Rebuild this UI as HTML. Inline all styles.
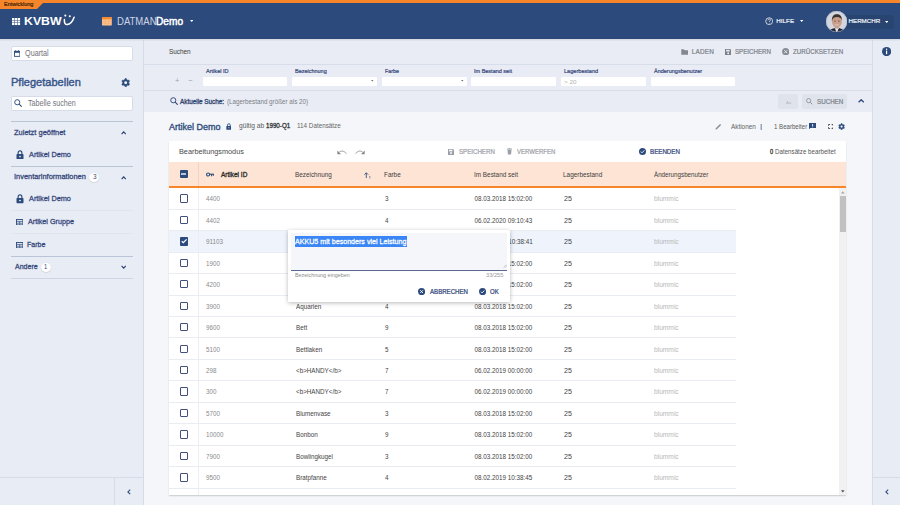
<!DOCTYPE html>
<html><head><meta charset="utf-8"><style>
html,body{margin:0;padding:0;width:900px;height:505px;overflow:hidden;background:#f3f5f9;}
body{position:relative;font-family:"Liberation Sans", sans-serif;}
.t{position:absolute;white-space:nowrap;}
.r{position:absolute;display:block;}
</style></head><body>
<div class="r" style="left:0.00px;top:0.00px;width:900.00px;height:39.00px;background:#2c4a7b;"></div>
<div class="r" style="left:0.00px;top:0.00px;width:900.00px;height:2.70px;background:#f7862a;"></div>
<svg class="r" style="left:0.00px;top:0.00px" width="47" height="10" viewBox="0 0 47 10"><polygon points="0,0 46,0 37,9 0,9" fill="#f7862a"/></svg>
<div class="t" style="left:3.60px;top:2px;font-size:5.5px;line-height:5.5px;color:#3f2208;font-weight:400;-webkit-text-stroke:0.198px #3f2208;transform:scaleX(1.0004);transform-origin:0 0;">Entwicklung</div>
<svg class="r" style="left:12.10px;top:17.90px" width="9" height="8" viewBox="0 0 9 8"><rect x="0.00" y="0.00" width="2.4" height="2.05" fill="#fff"/><rect x="0.00" y="2.50" width="2.4" height="2.05" fill="#fff"/><rect x="0.00" y="5.00" width="2.4" height="2.05" fill="#fff"/><rect x="2.85" y="0.00" width="2.4" height="2.05" fill="#fff"/><rect x="2.85" y="2.50" width="2.4" height="2.05" fill="#fff"/><rect x="2.85" y="5.00" width="2.4" height="2.05" fill="#fff"/><rect x="5.70" y="0.00" width="2.4" height="2.05" fill="#fff"/><rect x="5.70" y="2.50" width="2.4" height="2.05" fill="#fff"/><rect x="5.70" y="5.00" width="2.4" height="2.05" fill="#fff"/></svg>
<div class="t" style="left:24.22px;top:16px;font-size:11px;line-height:11px;color:#fff;font-weight:700;transform:scaleX(1.1177);transform-origin:0 0;">KVBW</div>
<svg class="r" style="left:62.00px;top:13.00px" width="14" height="14" viewBox="0 0 14 14"><circle cx="3.3" cy="2.6" r="1.05" fill="#fff"/><circle cx="7.8" cy="3.2" r="1.05" fill="#fff"/><path d="M2.4,6.5 C2.1,9.9 3.3,11.7 5,11.6 C7.8,11.4 10.6,8.4 12.1,4.2" stroke="#fff" stroke-width="1.5" fill="none" stroke-linecap="round"/></svg>
<svg class="r" style="left:101.80px;top:17.20px" width="9.8" height="8.6" viewBox="0 0 9.8 8.6"><rect x="0" y="0" width="9.8" height="8.6" rx="0.9" fill="#fcc28e"/><rect x="0" y="0" width="9.8" height="2.2" rx="0.9" fill="#f58a32"/><rect x="0" y="1.2" width="9.8" height="1" fill="#f58a32"/><path d="M0,4.3H9.8M0,6.4H9.8M3.27,2.2V8.6M6.53,2.2V8.6" stroke="#f7a867" stroke-width="0.45"/></svg>
<div class="t" style="left:117.08px;top:16px;font-size:10.6px;line-height:10.6px;color:#cdd5e5;font-weight:400;transform:scaleX(0.9004);transform-origin:0 0;">DATMAN</div>
<div class="t" style="left:156.43px;top:16px;font-size:10.6px;line-height:10.6px;color:#fff;font-weight:400;-webkit-text-stroke:0.488px #fff;transform:scaleX(0.9564);transform-origin:0 0;">Demo</div>
<svg class="r" style="left:189.60px;top:20.40px" width="3.4" height="2" viewBox="0 0 3.4 2"><polygon points="0,0 3.4,0 1.7,2" fill="#fff"/></svg>
<svg class="r" style="left:764.60px;top:17.10px" width="8.4" height="8.4" viewBox="0 0 8.4 8.4"><circle cx="4.2" cy="4.2" r="3.45" stroke="#e8ecf3" stroke-width="0.8" fill="none"/><path d="M3,3.3 C3,2.4 3.6,2 4.3,2 C5,2 5.5,2.5 5.5,3.1 C5.5,3.9 4.3,4.1 4.3,5" stroke="#e8ecf3" stroke-width="0.75" fill="none"/><circle cx="4.3" cy="6.2" r="0.45" fill="#e8ecf3"/></svg>
<div class="t" style="left:776.20px;top:18px;font-size:6.2px;line-height:6.2px;color:#eef1f6;font-weight:400;-webkit-text-stroke:0.223px #eef1f6;transform:scaleX(1.0000);transform-origin:0 0;letter-spacing:0.091px;">HILFE</div>
<svg class="r" style="left:800.40px;top:20.40px" width="3.4" height="2" viewBox="0 0 3.4 2"><polygon points="0,0 3.4,0 1.7,2" fill="#fff"/></svg>
<div class="r" style="left:836.00px;top:14.60px;width:57.70px;height:14.00px;background:#284470;border-radius:3px;"></div>
<svg class="r" style="left:825.80px;top:10.70px" width="21.2" height="21.2" viewBox="0 0 21.2 21.2"><defs><clipPath id="av"><circle cx="10.6" cy="10.6" r="10.6"/></clipPath></defs><g clip-path="url(#av)"><rect width="22" height="22" fill="#d3d6de"/><path d="M2,22 L4.5,18.6 L8.6,17 L10.8,18.6 L13,17 L17,18.4 L20,22Z" fill="#1f2433"/><path d="M8.7,17 L10.8,22 L12.9,17Z" fill="#e3e8f0"/><rect x="9" y="14.5" width="3.6" height="3" fill="#c29682"/><ellipse cx="10.9" cy="10.2" rx="4.9" ry="6.6" fill="#c99f8b"/><path d="M5.9,10.2 C5.6,5 8,3.2 10.9,3.2 C13.9,3.2 16.1,5 15.9,9.6 C15.3,7.2 14.2,6 10.9,5.9 C8,5.9 6.6,7.1 5.9,10.2Z" fill="#3b332e"/><ellipse cx="9" cy="9.9" rx="0.8" ry="0.5" fill="#5c463f"/><ellipse cx="12.9" cy="9.9" rx="0.8" ry="0.5" fill="#5c463f"/><path d="M9.2,13.6 Q10.9,14.8 12.6,13.6" stroke="#f0d6cc" stroke-width="0.8" fill="none"/></g><circle cx="10.6" cy="10.6" r="10.3" stroke="#aab2c4" stroke-width="0.6" fill="none"/></svg>
<div class="t" style="left:848.50px;top:18px;font-size:6.2px;line-height:6.2px;color:#eef1f6;font-weight:400;-webkit-text-stroke:0.223px #eef1f6;transform:scaleX(1.0000);transform-origin:0 0;letter-spacing:0.015px;">HERMCHR</div>
<svg class="r" style="left:884.50px;top:20.50px" width="3.4" height="2" viewBox="0 0 3.4 2"><polygon points="0,0 3.4,0 1.7,2" fill="#fff"/></svg>
<div class="r" style="left:0.00px;top:40.00px;width:143.00px;height:465.00px;background:#e8ecf4;"></div>
<div class="r" style="left:143.00px;top:40.00px;width:1.00px;height:465.00px;background:#d5dce8;"></div>
<div class="r" style="left:11.00px;top:46.00px;width:121.60px;height:15.00px;background:#fff;border:1px solid #d6dde8;border-radius:2px;box-sizing:border-box;"></div>
<svg class="r" style="left:13.90px;top:50.30px" width="6.3" height="6.8" viewBox="0 0 6.3 6.8"><rect x="0.45" y="1.3" width="5.4" height="5.05" fill="none" stroke="#2c4a7b" stroke-width="0.9"/><rect x="0.45" y="1.1" width="5.4" height="1.7" fill="#2c4a7b"/><rect x="1.3" y="0.2" width="0.8" height="1.2" fill="#2c4a7b"/><rect x="4.2" y="0.2" width="0.8" height="1.2" fill="#2c4a7b"/></svg>
<div class="t" style="left:24.74px;top:49px;font-size:8.3px;line-height:8.3px;color:#6f6f7a;font-weight:400;transform:scaleX(0.8721);transform-origin:0 0;">Quartal</div>
<div class="t" style="left:10.63px;top:77px;font-size:11.4px;line-height:11.4px;color:#36548a;font-weight:400;-webkit-text-stroke:0.41px #36548a;transform:scaleX(0.9672);transform-origin:0 0;">Pflegetabellen</div>
<svg class="r" style="left:120.90px;top:77.60px" width="9.4" height="9.4" viewBox="-4 -4 108 108"><polygon points="43.73,2.41 56.27,2.41 63.59,17.18 71.62,21.82 88.08,20.78 94.35,31.63 85.22,45.36 85.22,54.64 94.35,68.37 88.08,79.22 71.62,78.18 63.59,82.82 56.27,97.59 43.73,97.59 36.41,82.82 28.38,78.18 11.92,79.22 5.65,68.37 14.78,54.64 14.78,45.36 5.65,31.63 11.92,20.78 28.38,21.82 36.41,17.18" fill="#2c4a7b" stroke="#2c4a7b" stroke-width="6" stroke-linejoin="round"/><circle cx="50" cy="50" r="17" fill="#e8ecf4"/></svg>
<div class="r" style="left:11.00px;top:96.00px;width:121.60px;height:15.00px;background:#fff;border:1px solid #d6dde8;border-radius:2px;box-sizing:border-box;"></div>
<svg class="r" style="left:14.00px;top:99.30px" width="8.3" height="8.3" viewBox="0 0 8.4 8.4"><circle cx="3.3" cy="3.3" r="2.6" stroke="#2c4a7b" stroke-width="0.95" fill="none"/><path d="M5.2,5.2 L7.8,7.8" stroke="#2c4a7b" stroke-width="1.14"/></svg>
<div class="t" style="left:27.61px;top:99px;font-size:8.3px;line-height:8.3px;color:#74747e;font-weight:400;transform:scaleX(0.8620);transform-origin:0 0;">Tabelle suchen</div>
<div class="r" style="left:11.00px;top:121.00px;width:121.60px;height:1.00px;background:#b9c4d7;"></div>
<div class="t" style="left:14.20px;top:129px;font-size:7.3px;line-height:7.3px;color:#34467a;font-weight:400;-webkit-text-stroke:0.263px #34467a;transform:scaleX(1.0248);transform-origin:0 0;">Zuletzt geöffnet</div>
<svg class="r" style="left:120.80px;top:130.80px" width="5.4" height="4" viewBox="0 0 5.4 4"><path d="M0.6,3.2 L2.70,0.8 L4.80,3.2" stroke="#2d4370" stroke-width="1.1" fill="none"/></svg>
<svg class="r" style="left:16.40px;top:149.60px" width="8.0" height="9.4" viewBox="0 0 8 9.4"><path d="M2.1,4.3 V2.9 A1.9,1.95 0 0 1 5.9,2.9 V4.3" stroke="#2c4a7b" stroke-width="1.15" fill="none"/><rect x="0.5" y="4" width="7" height="5.3" rx="0.7" fill="#2c4a7b"/><circle cx="4" cy="6.6" r="0.8" fill="#fff"/></svg>
<div class="t" style="left:29.00px;top:151px;font-size:7.3px;line-height:7.3px;color:#34467a;font-weight:400;-webkit-text-stroke:0.263px #34467a;transform:scaleX(1.0043);transform-origin:0 0;">Artikel Demo</div>
<div class="r" style="left:11.00px;top:166.00px;width:121.60px;height:1.00px;background:#b9c4d7;"></div>
<div class="t" style="left:13.99px;top:173px;font-size:7.3px;line-height:7.3px;color:#34467a;font-weight:400;-webkit-text-stroke:0.263px #34467a;transform:scaleX(1.0180);transform-origin:0 0;">Inventarinformationen</div>
<div class="r" style="left:89.10px;top:172.90px;width:9.80px;height:9.00px;background:#fff;border-radius:50%;box-shadow:0 0.5px 1px rgba(0,0,0,0.18);"></div>
<div class="t" style="left:92.59px;top:174px;font-size:6.3px;line-height:6.3px;color:#3d4a78;font-weight:400;transform:scaleX(1.0323);transform-origin:0 0;">3</div>
<svg class="r" style="left:120.80px;top:175.50px" width="5.4" height="4" viewBox="0 0 5.4 4"><path d="M0.6,3.2 L2.70,0.8 L4.80,3.2" stroke="#2d4370" stroke-width="1.1" fill="none"/></svg>
<svg class="r" style="left:16.40px;top:194.20px" width="8.0" height="9.4" viewBox="0 0 8 9.4"><path d="M2.1,4.3 V2.9 A1.9,1.95 0 0 1 5.9,2.9 V4.3" stroke="#2c4a7b" stroke-width="1.15" fill="none"/><rect x="0.5" y="4" width="7" height="5.3" rx="0.7" fill="#2c4a7b"/><circle cx="4" cy="6.6" r="0.8" fill="#fff"/></svg>
<div class="t" style="left:29.00px;top:195px;font-size:7.3px;line-height:7.3px;color:#34467a;font-weight:400;-webkit-text-stroke:0.263px #34467a;transform:scaleX(1.0043);transform-origin:0 0;">Artikel Demo</div>
<div class="r" style="left:11.00px;top:210.30px;width:121.60px;height:0.70px;background:#dfe4ed;"></div>
<svg class="r" style="left:15.60px;top:218.60px" width="7.4" height="6.4" viewBox="0 0 7.4 6.4"><rect x="0.45" y="0.45" width="6.5" height="5.5" fill="none" stroke="#2c4a7b" stroke-width="0.9"/><path d="M0.4,2.4H7M3.7,2.4V6M0.4,4.2H7" stroke="#2c4a7b" stroke-width="0.7"/></svg>
<div class="t" style="left:27.70px;top:218px;font-size:7.3px;line-height:7.3px;color:#34467a;font-weight:400;-webkit-text-stroke:0.263px #34467a;transform:scaleX(0.9849);transform-origin:0 0;">Artikel Gruppe</div>
<div class="r" style="left:11.00px;top:233.30px;width:121.60px;height:0.70px;background:#dfe4ed;"></div>
<svg class="r" style="left:15.60px;top:241.50px" width="7.4" height="6.4" viewBox="0 0 7.4 6.4"><rect x="0.45" y="0.45" width="6.5" height="5.5" fill="none" stroke="#2c4a7b" stroke-width="0.9"/><path d="M0.4,2.4H7M3.7,2.4V6M0.4,4.2H7" stroke="#2c4a7b" stroke-width="0.7"/></svg>
<div class="t" style="left:27.22px;top:241px;font-size:7.3px;line-height:7.3px;color:#34467a;font-weight:400;-webkit-text-stroke:0.263px #34467a;transform:scaleX(0.9612);transform-origin:0 0;">Farbe</div>
<div class="r" style="left:11.00px;top:255.60px;width:121.60px;height:1.00px;background:#b9c4d7;"></div>
<div class="t" style="left:14.60px;top:263px;font-size:7.3px;line-height:7.3px;color:#34467a;font-weight:400;-webkit-text-stroke:0.263px #34467a;transform:scaleX(0.9622);transform-origin:0 0;">Andere</div>
<div class="r" style="left:41.00px;top:262.60px;width:9.80px;height:9.00px;background:#fff;border-radius:50%;box-shadow:0 0.5px 1px rgba(0,0,0,0.18);"></div>
<div class="t" style="left:44.23px;top:264px;font-size:6.3px;line-height:6.3px;color:#3d4a78;font-weight:400;transform:scaleX(0.9286);transform-origin:0 0;">1</div>
<svg class="r" style="left:120.80px;top:265.20px" width="5.4" height="4" viewBox="0 0 5.4 4"><path d="M0.6,0.8 L2.70,3.2 L4.80,0.8" stroke="#2d4370" stroke-width="1.1" fill="none"/></svg>
<div class="r" style="left:11.00px;top:277.80px;width:121.60px;height:0.90px;background:#cdd5e3;"></div>
<div class="r" style="left:0.00px;top:476.80px;width:143.00px;height:1.00px;background:#d5dce8;"></div>
<div class="r" style="left:114.00px;top:477.80px;width:1.00px;height:27.20px;background:#d5dce8;"></div>
<svg class="r" style="left:127.30px;top:488.60px" width="4" height="6" viewBox="0 0 4 6"><path d="M3.2,0.6 L0.9,2.9 L3.2,5.2" stroke="#2c4a7b" stroke-width="1.1" fill="none"/></svg>
<div class="r" style="left:871.60px;top:40.00px;width:28.40px;height:465.00px;background:#e8ecf4;"></div>
<div class="r" style="left:871.60px;top:40.00px;width:0.80px;height:465.00px;background:#d7dde8;"></div>
<svg class="r" style="left:881.80px;top:47.00px" width="9.2" height="9.2" viewBox="0 0 9.2 9.2"><circle cx="4.6" cy="4.6" r="4.6" fill="#2c4a7b"/><rect x="4.0" y="3.6" width="1.2" height="3.6" fill="#fff"/><circle cx="4.6" cy="2.3" r="0.7" fill="#fff"/></svg>
<div class="r" style="left:872.40px;top:476.80px;width:27.60px;height:1.00px;background:#d5dce8;"></div>
<svg class="r" style="left:884.60px;top:488.60px" width="4" height="6" viewBox="0 0 4 6"><path d="M3.2,0.6 L0.9,2.9 L3.2,5.2" stroke="#2c4a7b" stroke-width="1.1" fill="none"/></svg>
<div class="r" style="left:144.00px;top:40.00px;width:727.60px;height:71.80px;background:#e9ecf4;"></div>
<div class="t" style="left:168.73px;top:48px;font-size:7.0px;line-height:7.0px;color:#3a3a3a;font-weight:400;transform:scaleX(0.9111);transform-origin:0 0;">Suchen</div>
<svg class="r" style="left:681.00px;top:48.90px" width="7.4" height="6" viewBox="0 0 7.4 6"><path d="M0.3,0.3 H2.8 L3.7,1.2 H7.2 V5.8 H0.3Z" fill="#83878f"/></svg>
<div class="t" style="left:691.80px;top:49px;font-size:6.4px;line-height:6.4px;color:#80858d;font-weight:400;-webkit-text-stroke:0.23px #80858d;transform:scaleX(1.0000);transform-origin:0 0;letter-spacing:0.170px;">LADEN</div>
<svg class="r" style="left:724.90px;top:48.50px" width="6.4" height="6.4" viewBox="0 0 6.4 6.4"><path d="M0,0 H5.3 L6.4,1.1 V6.4 H0Z" fill="#7c8089"/><rect x="1.1" y="0.8" width="3.6" height="1.7" fill="#e9ecf4"/><circle cx="3.2" cy="4.3" r="1" fill="#e9ecf4"/></svg>
<div class="t" style="left:735.41px;top:49px;font-size:6.4px;line-height:6.4px;color:#80858d;font-weight:400;-webkit-text-stroke:0.23px #80858d;transform:scaleX(0.9667);transform-origin:0 0;letter-spacing:0.000px;">SPEICHERN</div>
<svg class="r" style="left:782.00px;top:48.00px" width="7.4" height="7.4" viewBox="0 0 7.4 7.4"><circle cx="3.7" cy="3.7" r="3.6" fill="#878b93"/><path d="M2.2,2.2 L5.2,5.2 M5.2,2.2 L2.2,5.2" stroke="#e9ecf4" stroke-width="0.9"/></svg>
<div class="t" style="left:793.11px;top:49px;font-size:6.4px;line-height:6.4px;color:#80858d;font-weight:400;-webkit-text-stroke:0.23px #80858d;transform:scaleX(0.9689);transform-origin:0 0;letter-spacing:0.000px;">ZURÜCKSETZEN</div>
<div class="r" style="left:144.00px;top:63.60px;width:727.60px;height:0.80px;background:#d8dee9;"></div>
<div class="t" style="left:205.60px;top:68px;font-size:6.0px;line-height:6.0px;color:#34467a;font-weight:400;-webkit-text-stroke:0.216px #34467a;transform:scaleX(0.9293);transform-origin:0 0;">Artikel ID</div>
<div class="t" style="left:294.93px;top:68px;font-size:6.0px;line-height:6.0px;color:#34467a;font-weight:400;-webkit-text-stroke:0.216px #34467a;transform:scaleX(0.9129);transform-origin:0 0;">Bezeichnung</div>
<div class="t" style="left:384.65px;top:68px;font-size:6.0px;line-height:6.0px;color:#34467a;font-weight:400;-webkit-text-stroke:0.216px #34467a;transform:scaleX(0.8845);transform-origin:0 0;">Farbe</div>
<div class="t" style="left:474.04px;top:68px;font-size:6.0px;line-height:6.0px;color:#34467a;font-weight:400;-webkit-text-stroke:0.216px #34467a;transform:scaleX(0.9172);transform-origin:0 0;">Im Bestand seit</div>
<div class="t" style="left:563.63px;top:68px;font-size:6.0px;line-height:6.0px;color:#34467a;font-weight:400;-webkit-text-stroke:0.216px #34467a;transform:scaleX(0.9316);transform-origin:0 0;">Lagerbestand</div>
<div class="t" style="left:653.60px;top:68px;font-size:6.0px;line-height:6.0px;color:#34467a;font-weight:400;-webkit-text-stroke:0.216px #34467a;transform:scaleX(0.9183);transform-origin:0 0;">Änderungsbenutzer</div>
<div class="r" style="left:202.80px;top:76.70px;width:84.50px;height:9.10px;background:#fff;border-radius:1px;"></div>
<div class="r" style="left:292.00px;top:76.70px;width:84.80px;height:9.10px;background:#fff;border-radius:1px;"></div>
<svg class="r" style="left:371.20px;top:80.20px" width="2.6" height="1.6" viewBox="0 0 2.6 1.6"><polygon points="0,0 2.6,0 1.3,1.6" fill="#777"/></svg>
<div class="r" style="left:382.00px;top:76.70px;width:84.70px;height:9.10px;background:#fff;border-radius:1px;"></div>
<svg class="r" style="left:461.10px;top:80.20px" width="2.6" height="1.6" viewBox="0 0 2.6 1.6"><polygon points="0,0 2.6,0 1.3,1.6" fill="#777"/></svg>
<div class="r" style="left:471.30px;top:76.70px;width:84.70px;height:9.10px;background:#fff;border-radius:1px;"></div>
<div class="r" style="left:560.70px;top:76.70px;width:85.30px;height:9.10px;background:#fff;border-radius:1px;"></div>
<div class="r" style="left:650.70px;top:76.70px;width:84.60px;height:9.10px;background:#fff;border-radius:1px;"></div>
<div class="t" style="left:564.29px;top:80px;font-size:5.9px;line-height:5.9px;color:#b0b0b0;font-weight:400;transform:scaleX(1.0652);transform-origin:0 0;">&gt; 20</div>
<div class="t" style="left:175.00px;top:77px;font-size:7.5px;line-height:7.5px;color:#9aa0aa;font-weight:400;transform:scaleX(1.0000);transform-origin:0 0;">+</div>
<div class="t" style="left:188.30px;top:77px;font-size:7.5px;line-height:7.5px;color:#9aa0aa;font-weight:400;transform:scaleX(1.0000);transform-origin:0 0;">−</div>
<div class="r" style="left:144.00px;top:90.20px;width:727.60px;height:0.80px;background:#d8dee9;"></div>
<svg class="r" style="left:170.00px;top:97.20px" width="8.3" height="8.3" viewBox="0 0 8.4 8.4"><circle cx="3.3" cy="3.3" r="2.6" stroke="#2c4a7b" stroke-width="0.95" fill="none"/><path d="M5.2,5.2 L7.8,7.8" stroke="#2c4a7b" stroke-width="1.14"/></svg>
<div class="t" style="left:180.00px;top:99px;font-size:6.4px;line-height:6.4px;color:#2d4370;font-weight:400;-webkit-text-stroke:0.294px #2d4370;transform:scaleX(0.9933);transform-origin:0 0;">Aktuelle Suche:</div>
<div class="t" style="left:227.41px;top:99px;font-size:6.4px;line-height:6.4px;color:#7a7f88;font-weight:400;transform:scaleX(0.9798);transform-origin:0 0;">(Lagerbestand größer als 20)</div>
<div class="r" style="left:777.80px;top:94.40px;width:20.40px;height:14.50px;background:#dfe3eb;border-radius:2px;"></div>
<div class="t" style="left:785.60px;top:101px;font-size:4.2px;line-height:4.2px;color:#b3b6bc;font-weight:400;transform:scaleX(0.9997);transform-origin:0 0;">Aa</div>
<div class="r" style="left:802.20px;top:94.40px;width:44.50px;height:14.50px;background:#dfe3eb;border-radius:2px;"></div>
<svg class="r" style="left:806.20px;top:98.30px" width="6.8" height="6.8" viewBox="0 0 8.4 8.4"><circle cx="3.3" cy="3.3" r="2.6" stroke="#8a9099" stroke-width="1.0" fill="none"/><path d="M5.2,5.2 L7.8,7.8" stroke="#8a9099" stroke-width="1.2"/></svg>
<div class="t" style="left:817.11px;top:99px;font-size:6.4px;line-height:6.4px;color:#80858d;font-weight:400;-webkit-text-stroke:0.23px #80858d;transform:scaleX(0.9733);transform-origin:0 0;letter-spacing:0.000px;">SUCHEN</div>
<svg class="r" style="left:858.00px;top:99.20px" width="6.4" height="4" viewBox="0 0 6.4 4"><path d="M0.6,3.2 L3.20,0.8 L5.80,3.2" stroke="#2c4a7b" stroke-width="1.4" fill="none"/></svg>
<div class="r" style="left:144.00px;top:111.80px;width:727.60px;height:393.20px;background:#f4f6f9;"></div>
<div class="t" style="left:169.20px;top:122px;font-size:9.8px;line-height:9.8px;color:#2c4a7b;font-weight:400;-webkit-text-stroke:0.353px #2c4a7b;transform:scaleX(0.9203);transform-origin:0 0;">Artikel Demo</div>
<svg class="r" style="left:225.70px;top:123.20px" width="5.76" height="6.768" viewBox="0 0 8 9.4"><path d="M2.1,4.3 V2.9 A1.9,1.95 0 0 1 5.9,2.9 V4.3" stroke="#2c4a7b" stroke-width="1.15" fill="none"/><rect x="0.5" y="4" width="7" height="5.3" rx="0.7" fill="#2c4a7b"/><circle cx="4" cy="6.6" r="0.8" fill="#fff"/></svg>
<div class="t" style="left:239.49px;top:123px;font-size:6.3px;line-height:6.3px;color:#5a5a5a;font-weight:400;transform:scaleX(1.0549);transform-origin:0 0;">gültig ab</div>
<div class="t" style="left:265.91px;top:123px;font-size:6.3px;line-height:6.3px;color:#333;font-weight:400;-webkit-text-stroke:0.29px #333;transform:scaleX(0.9868);transform-origin:0 0;">1990-Q1</div>
<div class="t" style="left:297.30px;top:123px;font-size:6.3px;line-height:6.3px;color:#666;font-weight:400;transform:scaleX(1.0033);transform-origin:0 0;">114 Datensätze</div>
<svg class="r" style="left:715.00px;top:122.90px" width="7" height="7" viewBox="0 0 7 7"><path d="M0.5,6.5 L0.8,5.2 L5.1,0.9 L6.1,1.9 L1.8,6.2Z" fill="#85888e"/></svg>
<div class="t" style="left:731.20px;top:124px;font-size:6.3px;line-height:6.3px;color:#616161;font-weight:400;transform:scaleX(1.0119);transform-origin:0 0;">Aktionen</div>
<svg class="r" style="left:760.00px;top:123.60px" width="2.4" height="6.4" viewBox="0 0 2.4 6.4"><circle cx="1.2" cy="1" r="0.75" fill="#43598a"/><circle cx="1.2" cy="3" r="0.75" fill="#43598a"/><circle cx="1.2" cy="5" r="0.75" fill="#43598a"/></svg>
<div class="t" style="left:773.51px;top:124px;font-size:6.3px;line-height:6.3px;color:#5a5a5a;font-weight:400;transform:scaleX(0.9668);transform-origin:0 0;">1 Bearbeiter</div>
<svg class="r" style="left:809.20px;top:123.40px" width="7.2" height="6.2" viewBox="0 0 7.2 6.2"><path d="M0,0 H7.2 V5 H1.4 L0,6.2Z" fill="#2c4a7b"/><rect x="3.2" y="1" width="0.9" height="2.1" fill="#fff"/><rect x="3.2" y="3.5" width="0.9" height="0.8" fill="#fff"/></svg>
<svg class="r" style="left:827.80px;top:124.00px" width="5.6" height="5" viewBox="0 0 5.6 5"><path d="M0.5,1.8V0.5H2 M3.6,0.5H5.1V1.8 M5.1,3.2V4.5H3.6 M2,4.5H0.5V3.2" stroke="#4a4a4a" stroke-width="0.95" fill="none"/></svg>
<svg class="r" style="left:837.60px;top:123.00px" width="7.2" height="7.2" viewBox="-4 -4 108 108"><polygon points="43.73,2.41 56.27,2.41 63.59,17.18 71.62,21.82 88.08,20.78 94.35,31.63 85.22,45.36 85.22,54.64 94.35,68.37 88.08,79.22 71.62,78.18 63.59,82.82 56.27,97.59 43.73,97.59 36.41,82.82 28.38,78.18 11.92,79.22 5.65,68.37 14.78,54.64 14.78,45.36 5.65,31.63 11.92,20.78 28.38,21.82 36.41,17.18" fill="#2c4a7b" stroke="#2c4a7b" stroke-width="6" stroke-linejoin="round"/><circle cx="50" cy="50" r="17" fill="#f3f5f9"/></svg>
<div class="r" style="left:168.60px;top:141.10px;width:677.60px;height:353.90px;background:#fff;box-shadow:0 0.6px 1.2px rgba(0,0,0,0.18);"></div>
<div class="t" style="left:179.38px;top:148px;font-size:7.0px;line-height:7.0px;color:#4a4a4a;font-weight:400;transform:scaleX(1.0412);transform-origin:0 0;">Bearbeitungsmodus</div>
<svg class="r" style="left:337.40px;top:149.80px" width="10" height="5" viewBox="0 0 10 5"><path d="M2.2,2.2 C4,0.6 7.2,0.5 9.3,3.6" stroke="#85898f" stroke-width="0.85" fill="none"/><polygon points="0.3,0.4 0.3,4.2 4.1,4.2" fill="#85898f"/></svg>
<svg class="r" style="left:355.30px;top:149.80px" width="10" height="5" viewBox="0 0 10 5"><path d="M7.8,2.2 C6,0.6 2.8,0.5 0.7,3.6" stroke="#85898f" stroke-width="0.85" fill="none"/><polygon points="9.7,0.4 9.7,4.2 5.9,4.2" fill="#85898f"/></svg>
<svg class="r" style="left:447.90px;top:148.80px" width="6" height="6" viewBox="0 0 6.4 6.4"><path d="M0,0 H5.3 L6.4,1.1 V6.4 H0Z" fill="#9aa0a8"/><rect x="1.1" y="0.8" width="3.6" height="1.7" fill="#fff"/><circle cx="3.2" cy="4.3" r="1" fill="#fff"/></svg>
<div class="t" style="left:458.61px;top:149px;font-size:6.4px;line-height:6.4px;color:#9fa3aa;font-weight:400;-webkit-text-stroke:0.23px #9fa3aa;transform:scaleX(0.9613);transform-origin:0 0;letter-spacing:0.000px;">SPEICHERN</div>
<svg class="r" style="left:506.50px;top:148.40px" width="5" height="6.6" viewBox="0 0 5 6.6"><rect x="0" y="0.6" width="5" height="0.9" fill="#9aa0a8"/><rect x="1.6" y="0" width="1.8" height="0.8" fill="#9aa0a8"/><path d="M0.5,1.8 H4.5 L4.1,6.6 H0.9Z" fill="#9aa0a8"/></svg>
<div class="t" style="left:516.70px;top:149px;font-size:6.4px;line-height:6.4px;color:#9fa3aa;font-weight:400;-webkit-text-stroke:0.23px #9fa3aa;transform:scaleX(0.9391);transform-origin:0 0;letter-spacing:0.000px;">VERWERFEN</div>
<svg class="r" style="left:639.00px;top:148.00px" width="7" height="7" viewBox="0 0 7 7"><circle cx="3.5" cy="3.5" r="3.5" fill="#2c4a7b"/><path d="M1.8,3.6 L3,4.8 L5.3,2.4" stroke="#fff" stroke-width="0.9" fill="none"/></svg>
<div class="t" style="left:649.52px;top:149px;font-size:6.4px;line-height:6.4px;color:#34477a;font-weight:400;-webkit-text-stroke:0.23px #34477a;transform:scaleX(0.9693);transform-origin:0 0;letter-spacing:0.000px;">BEENDEN</div>
<div class="t" style="left:769.82px;top:149px;font-size:6.3px;line-height:6.3px;color:#333;font-weight:400;-webkit-text-stroke:0.29px #333;transform:scaleX(0.9032);transform-origin:0 0;">0</div>
<div class="t" style="left:775.11px;top:149px;font-size:6.3px;line-height:6.3px;color:#555;font-weight:400;transform:scaleX(0.9838);transform-origin:0 0;">Datensätze bearbeitet</div>
<div class="r" style="left:168.60px;top:162.40px;width:677.60px;height:23.90px;background:#fde4d4;"></div>
<div class="r" style="left:168.60px;top:186.30px;width:677.60px;height:1.60px;background:#f7862a;"></div>
<div class="r" style="left:198.00px;top:162.40px;width:0.70px;height:23.90px;background:#f3d3c0;"></div>
<div class="r" style="left:179.90px;top:170.10px;width:7.90px;height:7.80px;background:#2c4a7b;border-radius:1px;"></div>
<div class="r" style="left:181.40px;top:173.20px;width:4.70px;height:1.50px;background:#b9c3d6;"></div>
<svg class="r" style="left:205.60px;top:172.40px" width="8.2" height="5" viewBox="0 0 8.2 5"><circle cx="2.1" cy="2.5" r="1.55" stroke="#2c4a7b" stroke-width="1.1" fill="none"/><path d="M3.4,2.2 H7.9" stroke="#2c4a7b" stroke-width="1.1"/><path d="M5.6,2.2 V4.3 M7.3,2.2 V3.9" stroke="#2c4a7b" stroke-width="1" fill="none"/></svg>
<div class="t" style="left:221.00px;top:172px;font-size:6.3px;line-height:6.3px;color:#2a2a2a;font-weight:400;-webkit-text-stroke:0.29px #2a2a2a;transform:scaleX(1.0315);transform-origin:0 0;">Artikel ID</div>
<div class="t" style="left:294.59px;top:172px;font-size:6.3px;line-height:6.3px;color:#404040;font-weight:400;transform:scaleX(1.0106);transform-origin:0 0;">Bezeichnung</div>
<svg class="r" style="left:363.60px;top:171.80px" width="7" height="7" viewBox="0 0 7 7"><path d="M2.3,6 V0.9 M0.4,2.7 L2.3,0.8 L4.2,2.7" stroke="#2c4a7b" stroke-width="0.85" fill="none"/><path d="M5.3,4.6 L5.9,4.2 V6.6" stroke="#2c4a7b" stroke-width="0.5" fill="none"/></svg>
<div class="t" style="left:384.19px;top:172px;font-size:6.3px;line-height:6.3px;color:#404040;font-weight:400;transform:scaleX(1.0156);transform-origin:0 0;">Farbe</div>
<div class="t" style="left:473.99px;top:172px;font-size:6.3px;line-height:6.3px;color:#404040;font-weight:400;transform:scaleX(1.0123);transform-origin:0 0;">Im Bestand seit</div>
<div class="t" style="left:563.49px;top:172px;font-size:6.3px;line-height:6.3px;color:#404040;font-weight:400;transform:scaleX(1.0178);transform-origin:0 0;">Lagerbestand</div>
<div class="t" style="left:654.00px;top:172px;font-size:6.3px;line-height:6.3px;color:#404040;font-weight:400;transform:scaleX(0.9892);transform-origin:0 0;">Änderungsbenutzer</div>
<div class="r" style="left:168.60px;top:208.75px;width:567.40px;height:0.70px;background:#e9ecf1;"></div>
<div class="r" style="left:180.00px;top:194.40px;width:8.30px;height:8.30px;background:#fff;border:1.25px solid #434e7a;border-radius:1px;box-sizing:border-box;"></div>
<div class="t" style="left:205.90px;top:196px;font-size:6.3px;line-height:6.3px;color:#8a8a8a;font-weight:400;transform:scaleX(0.9965);transform-origin:0 0;">4400</div>
<div class="t" style="left:384.80px;top:196px;font-size:6.3px;line-height:6.3px;color:#444;font-weight:400;transform:scaleX(0.9965);transform-origin:0 0;">3</div>
<div class="t" style="left:474.60px;top:196px;font-size:6.3px;line-height:6.3px;color:#444;font-weight:400;transform:scaleX(1.0000);transform-origin:0 0;">08.03.2018 15:02:00</div>
<div class="t" style="left:564.06px;top:196px;font-size:6.3px;line-height:6.3px;color:#444;font-weight:400;transform:scaleX(1.1224);transform-origin:0 0;">25</div>
<div class="t" style="left:653.68px;top:196px;font-size:6.3px;line-height:6.3px;color:#b8b8b8;font-weight:400;transform:scaleX(1.0523);transform-origin:0 0;">blummic</div>
<div class="r" style="left:168.60px;top:230.20px;width:567.40px;height:0.70px;background:#e9ecf1;"></div>
<div class="r" style="left:180.00px;top:215.85px;width:8.30px;height:8.30px;background:#fff;border:1.25px solid #434e7a;border-radius:1px;box-sizing:border-box;"></div>
<div class="t" style="left:205.90px;top:218px;font-size:6.3px;line-height:6.3px;color:#8a8a8a;font-weight:400;transform:scaleX(0.9965);transform-origin:0 0;">4402</div>
<div class="t" style="left:384.90px;top:218px;font-size:6.3px;line-height:6.3px;color:#444;font-weight:400;transform:scaleX(0.9965);transform-origin:0 0;">4</div>
<div class="t" style="left:474.60px;top:218px;font-size:6.3px;line-height:6.3px;color:#444;font-weight:400;transform:scaleX(1.0000);transform-origin:0 0;">06.02.2020 09:10:43</div>
<div class="t" style="left:564.06px;top:218px;font-size:6.3px;line-height:6.3px;color:#444;font-weight:400;transform:scaleX(1.1224);transform-origin:0 0;">25</div>
<div class="t" style="left:653.68px;top:218px;font-size:6.3px;line-height:6.3px;color:#b8b8b8;font-weight:400;transform:scaleX(1.0523);transform-origin:0 0;">blummic</div>
<div class="r" style="left:168.60px;top:230.90px;width:567.40px;height:20.85px;background:#eef3fc;"></div>
<div class="r" style="left:168.60px;top:251.65px;width:567.40px;height:0.70px;background:#e9ecf1;"></div>
<div class="r" style="left:180.00px;top:237.30px;width:8.30px;height:8.30px;background:#2c4a7b;border-radius:1px;"></div>
<svg class="r" style="left:180.00px;top:237.30px" width="8.3" height="8.3" viewBox="0 0 8.3 8.3"><path d="M1.7,4.2 L3.3,5.7 L6.6,2.4" stroke="#fff" stroke-width="1.25" fill="none"/></svg>
<div class="t" style="left:205.80px;top:239px;font-size:6.3px;line-height:6.3px;color:#8a8a8a;font-weight:400;transform:scaleX(0.9965);transform-origin:0 0;">91103</div>
<div class="t" style="left:474.60px;top:239px;font-size:6.3px;line-height:6.3px;color:#444;font-weight:400;transform:scaleX(1.0017);transform-origin:0 0;">08.02.2019 10:38:41</div>
<div class="t" style="left:564.06px;top:239px;font-size:6.3px;line-height:6.3px;color:#444;font-weight:400;transform:scaleX(1.1224);transform-origin:0 0;">25</div>
<div class="t" style="left:653.68px;top:239px;font-size:6.3px;line-height:6.3px;color:#b8b8b8;font-weight:400;transform:scaleX(1.0523);transform-origin:0 0;">blummic</div>
<div class="r" style="left:168.60px;top:273.10px;width:567.40px;height:0.70px;background:#e9ecf1;"></div>
<div class="r" style="left:180.00px;top:258.75px;width:8.30px;height:8.30px;background:#fff;border:1.25px solid #434e7a;border-radius:1px;box-sizing:border-box;"></div>
<div class="t" style="left:205.60px;top:261px;font-size:6.3px;line-height:6.3px;color:#8a8a8a;font-weight:400;transform:scaleX(0.9965);transform-origin:0 0;">1900</div>
<div class="t" style="left:474.60px;top:261px;font-size:6.3px;line-height:6.3px;color:#444;font-weight:400;transform:scaleX(1.0000);transform-origin:0 0;">08.03.2018 15:02:00</div>
<div class="t" style="left:564.06px;top:261px;font-size:6.3px;line-height:6.3px;color:#444;font-weight:400;transform:scaleX(1.1224);transform-origin:0 0;">25</div>
<div class="t" style="left:653.68px;top:261px;font-size:6.3px;line-height:6.3px;color:#b8b8b8;font-weight:400;transform:scaleX(1.0523);transform-origin:0 0;">blummic</div>
<div class="r" style="left:168.60px;top:294.55px;width:567.40px;height:0.70px;background:#e9ecf1;"></div>
<div class="r" style="left:180.00px;top:280.20px;width:8.30px;height:8.30px;background:#fff;border:1.25px solid #434e7a;border-radius:1px;box-sizing:border-box;"></div>
<div class="t" style="left:205.90px;top:282px;font-size:6.3px;line-height:6.3px;color:#8a8a8a;font-weight:400;transform:scaleX(0.9965);transform-origin:0 0;">4200</div>
<div class="t" style="left:474.60px;top:282px;font-size:6.3px;line-height:6.3px;color:#444;font-weight:400;transform:scaleX(1.0000);transform-origin:0 0;">08.03.2018 15:02:00</div>
<div class="t" style="left:564.06px;top:282px;font-size:6.3px;line-height:6.3px;color:#444;font-weight:400;transform:scaleX(1.1224);transform-origin:0 0;">25</div>
<div class="t" style="left:653.68px;top:282px;font-size:6.3px;line-height:6.3px;color:#b8b8b8;font-weight:400;transform:scaleX(1.0523);transform-origin:0 0;">blummic</div>
<div class="r" style="left:168.60px;top:316.00px;width:567.40px;height:0.70px;background:#e9ecf1;"></div>
<div class="r" style="left:180.00px;top:301.65px;width:8.30px;height:8.30px;background:#fff;border:1.25px solid #434e7a;border-radius:1px;box-sizing:border-box;"></div>
<div class="t" style="left:205.80px;top:304px;font-size:6.3px;line-height:6.3px;color:#8a8a8a;font-weight:400;transform:scaleX(0.9965);transform-origin:0 0;">3900</div>
<div class="t" style="left:296.00px;top:304px;font-size:6.3px;line-height:6.3px;color:#444;font-weight:400;transform:scaleX(0.9965);transform-origin:0 0;">Aquarien</div>
<div class="t" style="left:384.90px;top:304px;font-size:6.3px;line-height:6.3px;color:#444;font-weight:400;transform:scaleX(0.9965);transform-origin:0 0;">4</div>
<div class="t" style="left:474.60px;top:304px;font-size:6.3px;line-height:6.3px;color:#444;font-weight:400;transform:scaleX(1.0000);transform-origin:0 0;">08.03.2018 15:02:00</div>
<div class="t" style="left:564.06px;top:304px;font-size:6.3px;line-height:6.3px;color:#444;font-weight:400;transform:scaleX(1.1224);transform-origin:0 0;">25</div>
<div class="t" style="left:653.68px;top:304px;font-size:6.3px;line-height:6.3px;color:#b8b8b8;font-weight:400;transform:scaleX(1.0523);transform-origin:0 0;">blummic</div>
<div class="r" style="left:168.60px;top:337.45px;width:567.40px;height:0.70px;background:#e9ecf1;"></div>
<div class="r" style="left:180.00px;top:323.10px;width:8.30px;height:8.30px;background:#fff;border:1.25px solid #434e7a;border-radius:1px;box-sizing:border-box;"></div>
<div class="t" style="left:205.80px;top:325px;font-size:6.3px;line-height:6.3px;color:#8a8a8a;font-weight:400;transform:scaleX(0.9965);transform-origin:0 0;">9600</div>
<div class="t" style="left:295.50px;top:325px;font-size:6.3px;line-height:6.3px;color:#444;font-weight:400;transform:scaleX(0.9965);transform-origin:0 0;">Bett</div>
<div class="t" style="left:384.80px;top:325px;font-size:6.3px;line-height:6.3px;color:#444;font-weight:400;transform:scaleX(0.9965);transform-origin:0 0;">9</div>
<div class="t" style="left:474.60px;top:325px;font-size:6.3px;line-height:6.3px;color:#444;font-weight:400;transform:scaleX(1.0000);transform-origin:0 0;">08.03.2018 15:02:00</div>
<div class="t" style="left:564.06px;top:325px;font-size:6.3px;line-height:6.3px;color:#444;font-weight:400;transform:scaleX(1.1224);transform-origin:0 0;">25</div>
<div class="t" style="left:653.68px;top:325px;font-size:6.3px;line-height:6.3px;color:#b8b8b8;font-weight:400;transform:scaleX(1.0523);transform-origin:0 0;">blummic</div>
<div class="r" style="left:168.60px;top:358.90px;width:567.40px;height:0.70px;background:#e9ecf1;"></div>
<div class="r" style="left:180.00px;top:344.55px;width:8.30px;height:8.30px;background:#fff;border:1.25px solid #434e7a;border-radius:1px;box-sizing:border-box;"></div>
<div class="t" style="left:205.80px;top:347px;font-size:6.3px;line-height:6.3px;color:#8a8a8a;font-weight:400;transform:scaleX(0.9965);transform-origin:0 0;">5100</div>
<div class="t" style="left:295.50px;top:347px;font-size:6.3px;line-height:6.3px;color:#444;font-weight:400;transform:scaleX(0.9965);transform-origin:0 0;">Bettlaken</div>
<div class="t" style="left:384.80px;top:347px;font-size:6.3px;line-height:6.3px;color:#444;font-weight:400;transform:scaleX(0.9965);transform-origin:0 0;">5</div>
<div class="t" style="left:474.60px;top:347px;font-size:6.3px;line-height:6.3px;color:#444;font-weight:400;transform:scaleX(1.0000);transform-origin:0 0;">08.03.2018 15:02:00</div>
<div class="t" style="left:564.06px;top:347px;font-size:6.3px;line-height:6.3px;color:#444;font-weight:400;transform:scaleX(1.1224);transform-origin:0 0;">25</div>
<div class="t" style="left:653.68px;top:347px;font-size:6.3px;line-height:6.3px;color:#b8b8b8;font-weight:400;transform:scaleX(1.0523);transform-origin:0 0;">blummic</div>
<div class="r" style="left:168.60px;top:380.35px;width:567.40px;height:0.70px;background:#e9ecf1;"></div>
<div class="r" style="left:180.00px;top:366.00px;width:8.30px;height:8.30px;background:#fff;border:1.25px solid #434e7a;border-radius:1px;box-sizing:border-box;"></div>
<div class="t" style="left:205.70px;top:368px;font-size:6.3px;line-height:6.3px;color:#8a8a8a;font-weight:400;transform:scaleX(0.9965);transform-origin:0 0;">298</div>
<div class="t" style="left:295.70px;top:368px;font-size:6.3px;line-height:6.3px;color:#444;font-weight:400;transform:scaleX(0.9965);transform-origin:0 0;">&lt;b&gt;HANDY&lt;/b&gt;</div>
<div class="t" style="left:384.70px;top:368px;font-size:6.3px;line-height:6.3px;color:#444;font-weight:400;transform:scaleX(0.9965);transform-origin:0 0;">7</div>
<div class="t" style="left:474.60px;top:368px;font-size:6.3px;line-height:6.3px;color:#444;font-weight:400;transform:scaleX(1.0000);transform-origin:0 0;">06.02.2019 00:00:00</div>
<div class="t" style="left:564.06px;top:368px;font-size:6.3px;line-height:6.3px;color:#444;font-weight:400;transform:scaleX(1.1224);transform-origin:0 0;">25</div>
<div class="t" style="left:653.68px;top:368px;font-size:6.3px;line-height:6.3px;color:#b8b8b8;font-weight:400;transform:scaleX(1.0523);transform-origin:0 0;">blummic</div>
<div class="r" style="left:168.60px;top:401.80px;width:567.40px;height:0.70px;background:#e9ecf1;"></div>
<div class="r" style="left:180.00px;top:387.45px;width:8.30px;height:8.30px;background:#fff;border:1.25px solid #434e7a;border-radius:1px;box-sizing:border-box;"></div>
<div class="t" style="left:205.80px;top:389px;font-size:6.3px;line-height:6.3px;color:#8a8a8a;font-weight:400;transform:scaleX(0.9965);transform-origin:0 0;">300</div>
<div class="t" style="left:295.70px;top:389px;font-size:6.3px;line-height:6.3px;color:#444;font-weight:400;transform:scaleX(0.9965);transform-origin:0 0;">&lt;b&gt;HANDY&lt;/b&gt;</div>
<div class="t" style="left:384.70px;top:389px;font-size:6.3px;line-height:6.3px;color:#444;font-weight:400;transform:scaleX(0.9965);transform-origin:0 0;">7</div>
<div class="t" style="left:474.60px;top:389px;font-size:6.3px;line-height:6.3px;color:#444;font-weight:400;transform:scaleX(1.0000);transform-origin:0 0;">06.02.2019 00:00:00</div>
<div class="t" style="left:564.06px;top:389px;font-size:6.3px;line-height:6.3px;color:#444;font-weight:400;transform:scaleX(1.1224);transform-origin:0 0;">25</div>
<div class="t" style="left:653.68px;top:389px;font-size:6.3px;line-height:6.3px;color:#b8b8b8;font-weight:400;transform:scaleX(1.0523);transform-origin:0 0;">blummic</div>
<div class="r" style="left:168.60px;top:423.25px;width:567.40px;height:0.70px;background:#e9ecf1;"></div>
<div class="r" style="left:180.00px;top:408.90px;width:8.30px;height:8.30px;background:#fff;border:1.25px solid #434e7a;border-radius:1px;box-sizing:border-box;"></div>
<div class="t" style="left:205.80px;top:411px;font-size:6.3px;line-height:6.3px;color:#8a8a8a;font-weight:400;transform:scaleX(0.9965);transform-origin:0 0;">5700</div>
<div class="t" style="left:295.50px;top:411px;font-size:6.3px;line-height:6.3px;color:#444;font-weight:400;transform:scaleX(0.9965);transform-origin:0 0;">Blumenvase</div>
<div class="t" style="left:384.80px;top:411px;font-size:6.3px;line-height:6.3px;color:#444;font-weight:400;transform:scaleX(0.9965);transform-origin:0 0;">3</div>
<div class="t" style="left:474.60px;top:411px;font-size:6.3px;line-height:6.3px;color:#444;font-weight:400;transform:scaleX(1.0000);transform-origin:0 0;">08.03.2018 15:02:00</div>
<div class="t" style="left:564.06px;top:411px;font-size:6.3px;line-height:6.3px;color:#444;font-weight:400;transform:scaleX(1.1224);transform-origin:0 0;">25</div>
<div class="t" style="left:653.68px;top:411px;font-size:6.3px;line-height:6.3px;color:#b8b8b8;font-weight:400;transform:scaleX(1.0523);transform-origin:0 0;">blummic</div>
<div class="r" style="left:168.60px;top:444.70px;width:567.40px;height:0.70px;background:#e9ecf1;"></div>
<div class="r" style="left:180.00px;top:430.35px;width:8.30px;height:8.30px;background:#fff;border:1.25px solid #434e7a;border-radius:1px;box-sizing:border-box;"></div>
<div class="t" style="left:205.60px;top:432px;font-size:6.3px;line-height:6.3px;color:#8a8a8a;font-weight:400;transform:scaleX(0.9965);transform-origin:0 0;">10000</div>
<div class="t" style="left:295.50px;top:432px;font-size:6.3px;line-height:6.3px;color:#444;font-weight:400;transform:scaleX(0.9965);transform-origin:0 0;">Bonbon</div>
<div class="t" style="left:384.80px;top:432px;font-size:6.3px;line-height:6.3px;color:#444;font-weight:400;transform:scaleX(0.9965);transform-origin:0 0;">9</div>
<div class="t" style="left:474.60px;top:432px;font-size:6.3px;line-height:6.3px;color:#444;font-weight:400;transform:scaleX(1.0000);transform-origin:0 0;">08.03.2018 15:02:00</div>
<div class="t" style="left:564.06px;top:432px;font-size:6.3px;line-height:6.3px;color:#444;font-weight:400;transform:scaleX(1.1224);transform-origin:0 0;">25</div>
<div class="t" style="left:653.68px;top:432px;font-size:6.3px;line-height:6.3px;color:#b8b8b8;font-weight:400;transform:scaleX(1.0523);transform-origin:0 0;">blummic</div>
<div class="r" style="left:168.60px;top:466.15px;width:567.40px;height:0.70px;background:#e9ecf1;"></div>
<div class="r" style="left:180.00px;top:451.80px;width:8.30px;height:8.30px;background:#fff;border:1.25px solid #434e7a;border-radius:1px;box-sizing:border-box;"></div>
<div class="t" style="left:205.70px;top:454px;font-size:6.3px;line-height:6.3px;color:#8a8a8a;font-weight:400;transform:scaleX(0.9965);transform-origin:0 0;">7900</div>
<div class="t" style="left:295.50px;top:454px;font-size:6.3px;line-height:6.3px;color:#444;font-weight:400;transform:scaleX(0.9965);transform-origin:0 0;">Bowlingkugel</div>
<div class="t" style="left:384.80px;top:454px;font-size:6.3px;line-height:6.3px;color:#444;font-weight:400;transform:scaleX(0.9965);transform-origin:0 0;">3</div>
<div class="t" style="left:474.60px;top:454px;font-size:6.3px;line-height:6.3px;color:#444;font-weight:400;transform:scaleX(1.0000);transform-origin:0 0;">08.03.2018 15:02:00</div>
<div class="t" style="left:564.06px;top:454px;font-size:6.3px;line-height:6.3px;color:#444;font-weight:400;transform:scaleX(1.1224);transform-origin:0 0;">25</div>
<div class="t" style="left:653.68px;top:454px;font-size:6.3px;line-height:6.3px;color:#b8b8b8;font-weight:400;transform:scaleX(1.0523);transform-origin:0 0;">blummic</div>
<div class="r" style="left:168.60px;top:487.60px;width:567.40px;height:0.70px;background:#e9ecf1;"></div>
<div class="r" style="left:180.00px;top:473.25px;width:8.30px;height:8.30px;background:#fff;border:1.25px solid #434e7a;border-radius:1px;box-sizing:border-box;"></div>
<div class="t" style="left:205.80px;top:475px;font-size:6.3px;line-height:6.3px;color:#8a8a8a;font-weight:400;transform:scaleX(0.9965);transform-origin:0 0;">9500</div>
<div class="t" style="left:295.50px;top:475px;font-size:6.3px;line-height:6.3px;color:#444;font-weight:400;transform:scaleX(0.9965);transform-origin:0 0;">Bratpfanne</div>
<div class="t" style="left:384.90px;top:475px;font-size:6.3px;line-height:6.3px;color:#444;font-weight:400;transform:scaleX(0.9965);transform-origin:0 0;">4</div>
<div class="t" style="left:474.60px;top:475px;font-size:6.3px;line-height:6.3px;color:#444;font-weight:400;transform:scaleX(1.0000);transform-origin:0 0;">08.02.2019 10:38:45</div>
<div class="t" style="left:564.06px;top:475px;font-size:6.3px;line-height:6.3px;color:#444;font-weight:400;transform:scaleX(1.1224);transform-origin:0 0;">25</div>
<div class="t" style="left:653.68px;top:475px;font-size:6.3px;line-height:6.3px;color:#b8b8b8;font-weight:400;transform:scaleX(1.0523);transform-origin:0 0;">blummic</div>
<div class="r" style="left:198.00px;top:188.00px;width:0.70px;height:307.00px;background:#eceef2;"></div>
<div class="r" style="left:839.20px;top:188.00px;width:7.00px;height:307.00px;background:#f1f1f1;"></div>
<div class="r" style="left:840.00px;top:195.60px;width:5.60px;height:36.40px;background:#c1c1c1;"></div>
<svg class="r" style="left:841.00px;top:190.80px" width="4" height="3" viewBox="0 0 4 3"><polygon points="0,2.4 3.6,2.4 1.8,0.3" fill="#a3a3a3"/></svg>
<svg class="r" style="left:841.00px;top:489.60px" width="4" height="3" viewBox="0 0 4 3"><polygon points="0,0.3 3.6,0.3 1.8,2.4" fill="#505050"/></svg>
<div class="r" style="left:0.00px;top:39.00px;width:900.00px;height:2.00px;background:linear-gradient(rgba(20,30,50,0.16),rgba(20,30,50,0));"></div>
<div class="r" style="left:287.60px;top:230.00px;width:222.70px;height:71.60px;background:#fff;box-shadow:0 1px 4px rgba(0,0,0,0.28);border-radius:1px;"></div>
<div class="r" style="left:291.40px;top:232.60px;width:215.50px;height:37.50px;background:#f5f6fa;"></div>
<div class="r" style="left:291.40px;top:269.80px;width:215.50px;height:1.20px;background:#5b6a91;"></div>
<div class="r" style="left:295.10px;top:236.00px;width:111.90px;height:10.70px;background:#3a86f6;"></div>
<div class="t" style="left:295.30px;top:238px;font-size:7.3px;line-height:7.3px;color:#fff;font-weight:400;-webkit-text-stroke:0.263px #fff;transform:scaleX(0.9740);transform-origin:0 0;">AKKU5 mit besonders viel Leistung</div>
<svg class="r" style="left:502.50px;top:264.40px" width="4" height="4" viewBox="0 0 4 4"><path d="M3.6,0.6 L0.6,3.6 M3.6,2.2 L2.2,3.6" stroke="#999" stroke-width="0.5"/></svg>
<div class="t" style="left:294.57px;top:273px;font-size:5.0px;line-height:5.0px;color:#8a8a8a;font-weight:400;transform:scaleX(1.0758);transform-origin:0 0;">Bezeichnung eingeben</div>
<div class="t" style="left:485.79px;top:273px;font-size:5.0px;line-height:5.0px;color:#999;font-weight:400;transform:scaleX(1.1391);transform-origin:0 0;">33/255</div>
<svg class="r" style="left:418.20px;top:288.00px" width="7.2" height="7.2" viewBox="0 0 7.2 7.2"><circle cx="3.6" cy="3.6" r="3.6" fill="#2c4a7b"/><path d="M2.2,2.2 L5,5 M5,2.2 L2.2,5" stroke="#fff" stroke-width="0.9"/></svg>
<div class="t" style="left:429.50px;top:289px;font-size:6.5px;line-height:6.5px;color:#34477a;font-weight:400;-webkit-text-stroke:0.234px #34477a;transform:scaleX(0.9384);transform-origin:0 0;letter-spacing:0.000px;">ABBRECHEN</div>
<svg class="r" style="left:479.10px;top:288.00px" width="7.2" height="7.2" viewBox="0 0 7.2 7.2"><circle cx="3.6" cy="3.6" r="3.6" fill="#2c4a7b"/><path d="M1.9,3.7 L3.1,4.9 L5.4,2.5" stroke="#fff" stroke-width="0.9" fill="none"/></svg>
<div class="t" style="left:490.12px;top:289px;font-size:6.5px;line-height:6.5px;color:#34477a;font-weight:400;-webkit-text-stroke:0.234px #34477a;transform:scaleX(0.9276);transform-origin:0 0;letter-spacing:0.000px;">OK</div>
</body></html>
